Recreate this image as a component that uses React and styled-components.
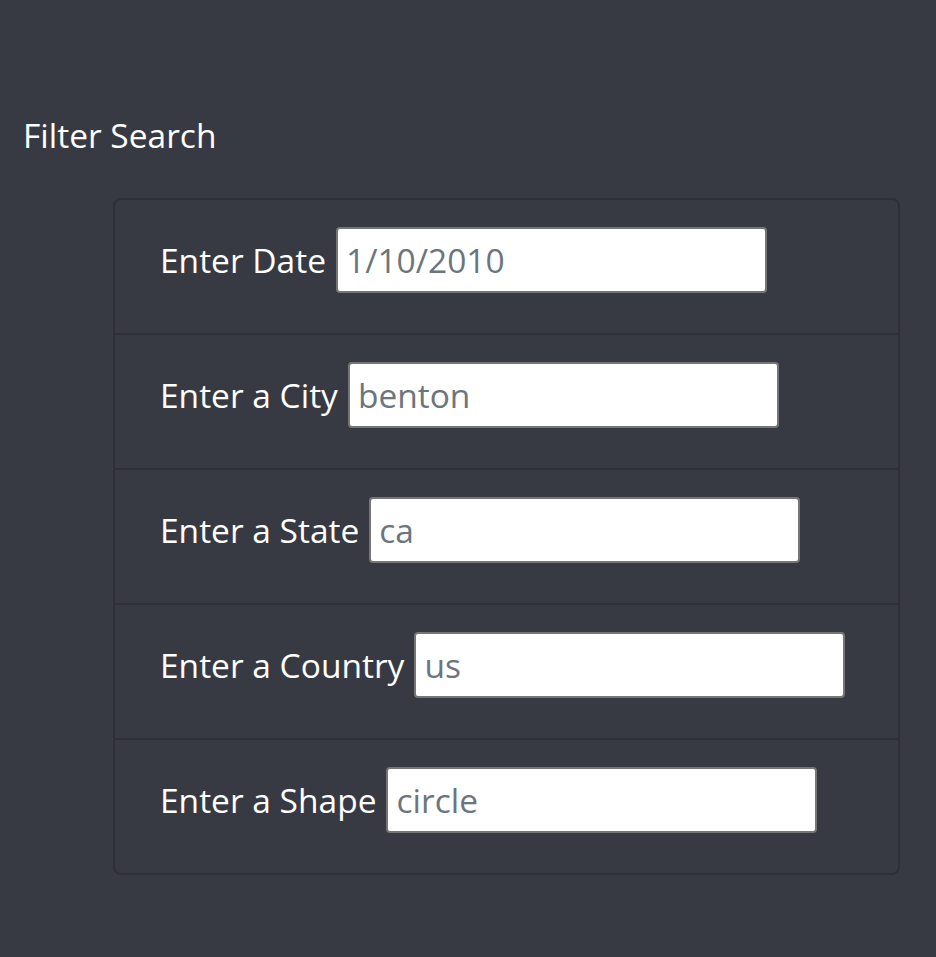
import React from "react";
import styled, { createGlobalStyle } from "styled-components";

const Global = createGlobalStyle`
  html, body { margin: 0; padding: 0; background: #373a42; }
  body { font-family: "Open Sans", "Noto Sans", sans-serif; min-height: 957px; }
`;

const Page = styled.div`
  padding: 111px 36px 80px 23px;
`;

const Title = styled.div`
  color: #ffffff;
  font-size: 33.5px;
  line-height: 48px;
  height: 48px;
  margin-bottom: 39px;
`;

const Panel = styled.ul`
  list-style: none;
  margin: 0 0 0 90px;
  padding: 0;
  width: 787px;
  box-sizing: border-box;
  border: 2px solid #2e3036;
  border-radius: 8px;
`;

const Row = styled.li`
  display: flex;
  align-items: center;
  padding: 0 0 13px 45px;
  box-sizing: border-box;
  border-top: ${(p) => (p.first ? "none" : "2px solid #2e3036")};
  height: ${(p) => (p.first ? "133px" : "135px")};
`;

const Label = styled.label`
  color: #ffffff;
  font-size: 33.5px;
  line-height: 48px;
  margin-right: 10px;
  white-space: nowrap;
`;

const Input = styled.input`
  width: 431px;
  height: 66px;
  box-sizing: border-box;
  border: 2px solid #767676;
  border-radius: 4px;
  background: #ffffff;
  font-family: inherit;
  font-size: 33.5px;
  padding: 0 8px;
  color: #6c757d;
  outline: none;
  &::placeholder { color: #6c757d; opacity: 1; }
`;

const fields = [
  ["Enter Date", "1/10/2010"],
  ["Enter a City", "benton"],
  ["Enter a State", "ca"],
  ["Enter a Country", "us"],
  ["Enter a Shape", "circle"],
];

export default function App() {
  return (
    <>
      <Global />
      <Page>
        <Title>Filter Search</Title>
        <Panel>
          {fields.map(([label, ph], i) => (
            <Row key={label} first={i === 0}>
              <Label>{label}</Label>
              <Input type="text" placeholder={ph} />
            </Row>
          ))}
        </Panel>
      </Page>
    </>
  );
}
